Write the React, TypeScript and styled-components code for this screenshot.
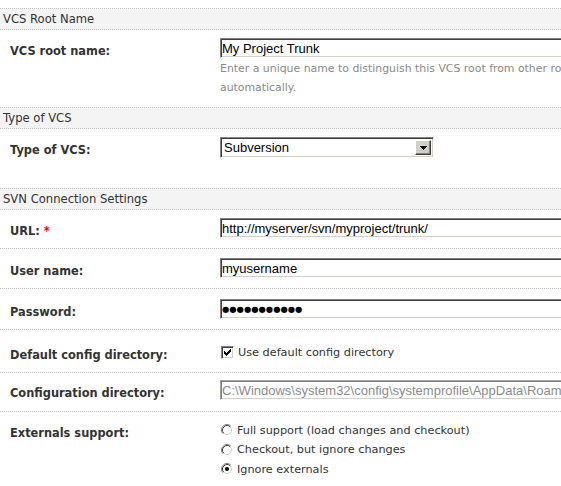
import React from "react";
import styled, { createGlobalStyle } from "styled-components";

const GlobalStyle = createGlobalStyle`
  html, body {
    margin: 0;
    padding: 0;
    background: #ffffff;
    overflow: hidden;
  }
  body {
    font-family: "DejaVu Sans", Verdana, sans-serif;
  }
`;

const Page = styled.div`
  width: 561px;
  padding-top: 8px;
  overflow: hidden;
`;

const SectionHeader = styled.div`
  height: 20px;
  line-height: 20px;
  padding-left: 3px;
  background: #f4f4f4;
  border-top: 1px dotted #c4c4c4;
  border-bottom: 1px dotted #c4c4c4;
  font-family: "DejaVu Sans", Verdana, sans-serif;
  font-size: 11.6px;
  color: #333333;
  white-space: nowrap;
`;

const Row = styled.div<{ $pt: number; $pb: number; $sep?: boolean }>`
  display: grid;
  grid-template-columns: 220px 1fr;
  align-items: start;
  padding: ${(p) => p.$pt}px 0 ${(p) => p.$pb}px;
  border-bottom: ${(p) => (p.$sep ? "1px dotted #c4c4c4" : "none")};
`;

const Label = styled.label`
  padding: 6px 0 0 10px;
  font-family: "DejaVu Sans", Verdana, sans-serif;
  font-weight: bold;
  font-size: 11.4px;
  line-height: 14px;
  color: #333333;
  white-space: nowrap;
`;

const Required = styled.span`
  color: #ff0000;
  margin-left: 4px;
`;

const Field = styled.div`
  min-width: 0;
  display: flex;
  flex-direction: column;
  align-items: flex-start;
`;

const TextInput = styled.input<{ $dots?: boolean }>`
  box-sizing: border-box;
  display: block;
  width: 420px;
  height: 20px;
  margin: 0;
  padding: 0 1px;
  background: #ffffff;
  border: 1px solid;
  border-color: #808080 #ffffff #ffffff #808080;
  box-shadow: inset 1px 1px 0 #404040, inset -1px -1px 0 #d4d0c8;
  font-family: ${(p) => (p.$dots ? '"DejaVu Sans", sans-serif' : '"Liberation Sans", Arial, sans-serif')};
  font-size: ${(p) => (p.$dots ? "8.4px" : "13px")};
  color: #000000;
  outline: none;

  &:disabled {
    color: #8c8c8c;
    background: #ffffff;
    border-color: #a0a0a0 #ffffff #ffffff #a0a0a0;
    box-shadow: inset 1px 1px 0 #808080, inset -1px -1px 0 #d4d0c8;
  }
`;

const Help = styled.div`
  margin-top: 1px;
  font-family: "DejaVu Sans", Verdana, sans-serif;
  font-size: 10.9px;
  line-height: 19px;
  color: #8a8a8a;
  white-space: nowrap;
`;

const SelectBox = styled.div`
  box-sizing: border-box;
  width: 214px;
  height: 21px;
  display: flex;
  align-items: stretch;
  background: #ffffff;
  border: 1px solid;
  border-color: #808080 #ffffff #ffffff #808080;
  box-shadow: inset 1px 1px 0 #404040, inset -1px -1px 0 #d4d0c8;
  padding: 2px;
`;

const SelectValue = styled.span`
  flex: 1;
  padding-left: 1px;
  font-family: "Liberation Sans", Arial, sans-serif;
  font-size: 13px;
  line-height: 15px;
  color: #000000;
`;

const DropButton = styled.span`
  box-sizing: border-box;
  width: 16px;
  display: flex;
  align-items: center;
  justify-content: center;
  background: #d4d0c8;
  border: 1px solid;
  border-color: #ffffff #404040 #404040 #ffffff;
  box-shadow: inset -1px -1px 0 #808080;
`;

const OptionLine = styled.label<{ $h?: number }>`
  display: flex;
  align-items: center;
  height: ${(p) => p.$h ?? 20}px;
  padding-left: 1px;
  gap: 4px;
  font-family: "DejaVu Sans", Verdana, sans-serif;
  font-size: 11.25px;
  color: #333333;
  white-space: nowrap;
`;

const CheckBoxBox = styled.span`
  box-sizing: border-box;
  width: 13px;
  height: 13px;
  display: block;
  background: #ffffff;
  border: 1px solid;
  border-color: #808080 #ffffff #ffffff #808080;
  box-shadow: inset 1px 1px 0 #404040, inset -1px -1px 0 #d4d0c8;
  padding: 2px;
`;

const OptionGroup = styled.div`
  display: flex;
  flex-direction: column;
`;

function Arrow() {
  return (
    <svg width="7" height="4" viewBox="0 0 7 4" shapeRendering="crispEdges">
      <path d="M0 0h7v1H0zM1 1h5v1H1zM2 2h3v1H2zM3 3h1v1H3z" fill="#000" />
    </svg>
  );
}

function Check() {
  return (
    <svg width="7" height="7" viewBox="0 0 7 7" shapeRendering="crispEdges" style={{ display: "block" }}>
      <path
        d="M6 0h1v1H6zM5 1h2v1H5zM0 2h1v1H0zM4 2h3v1H4zM0 3h2v1H0zM3 3h3v1H3zM0 4h5v1H0zM1 5h3v1H1zM2 6h1v1H2z"
        fill="#000"
      />
    </svg>
  );
}

function Radio({ checked }: { checked?: boolean }) {
  return (
    <svg width="12" height="12" viewBox="0 0 12 12">
      <circle cx="6" cy="6" r="5" fill="#ffffff" />
      <path d="M2.11 9.89 A5.5 5.5 0 0 1 9.89 2.11" fill="none" stroke="#808080" strokeWidth="1" />
      <path d="M9.89 2.11 A5.5 5.5 0 0 1 2.11 9.89" fill="none" stroke="#ffffff" strokeWidth="1" />
      <path d="M2.82 9.18 A4.5 4.5 0 0 1 9.18 2.82" fill="none" stroke="#404040" strokeWidth="1" />
      <path d="M9.18 2.82 A4.5 4.5 0 0 1 2.82 9.18" fill="none" stroke="#d4d0c8" strokeWidth="1" />
      {checked && <circle cx="6" cy="6" r="2" fill="#000000" />}
    </svg>
  );
}

export default function App() {
  return (
    <>
      <GlobalStyle />
      <Page>
        <SectionHeader>VCS Root Name</SectionHeader>
        <Row $pt={8} $pb={10}>
          <Label>VCS root name:</Label>
          <Field>
            <TextInput type="text" defaultValue="My Project Trunk" />
            <Help>
              Enter a unique name to distinguish this VCS root from other roots. If not specified, the name will be generated
              <br />
              automatically.
            </Help>
          </Field>
        </Row>

        <SectionHeader>Type of VCS</SectionHeader>
        <Row $pt={8} $pb={30}>
          <Label>Type of VCS:</Label>
          <Field>
            <SelectBox role="combobox" aria-label="Type of VCS">
              <SelectValue>Subversion</SelectValue>
              <DropButton>
                <Arrow />
              </DropButton>
            </SelectBox>
          </Field>
        </Row>

        <SectionHeader>SVN Connection Settings</SectionHeader>
        <Row $pt={8} $pb={10} $sep>
          <Label>
            URL:<Required>*</Required>
          </Label>
          <Field>
            <TextInput type="text" defaultValue="http://myserver/svn/myproject/trunk/" />
          </Field>
        </Row>
        <Row $pt={9} $pb={10} $sep>
          <Label>User name:</Label>
          <Field>
            <TextInput type="text" defaultValue="myusername" />
          </Field>
        </Row>
        <Row $pt={10} $pb={10} $sep>
          <Label>Password:</Label>
          <Field>
            <TextInput type="text" readOnly $dots defaultValue="●●●●●●●●●●●" />
          </Field>
        </Row>
        <Row $pt={12} $pb={10} $sep>
          <Label>Default config directory:</Label>
          <Field>
            <OptionLine>
              <CheckBoxBox>
                <Check />
              </CheckBoxBox>
              Use default config directory
            </OptionLine>
          </Field>
        </Row>
        <Row $pt={7} $pb={11} $sep>
          <Label>Configuration directory:</Label>
          <Field>
            <TextInput
              type="text"
              disabled
              defaultValue="C:\Windows\system32\config\systemprofile\AppData\Roaming\Subversion"
            />
          </Field>
        </Row>
        <Row $pt={8} $pb={8}>
          <Label>Externals support:</Label>
          <Field>
            <OptionGroup>
              <OptionLine $h={20}>
                <Radio />
                Full support (load changes and checkout)
              </OptionLine>
              <OptionLine $h={19}>
                <Radio />
                Checkout, but ignore changes
              </OptionLine>
              <OptionLine $h={20}>
                <Radio checked />
                Ignore externals
              </OptionLine>
            </OptionGroup>
          </Field>
        </Row>
      </Page>
    </>
  );
}
